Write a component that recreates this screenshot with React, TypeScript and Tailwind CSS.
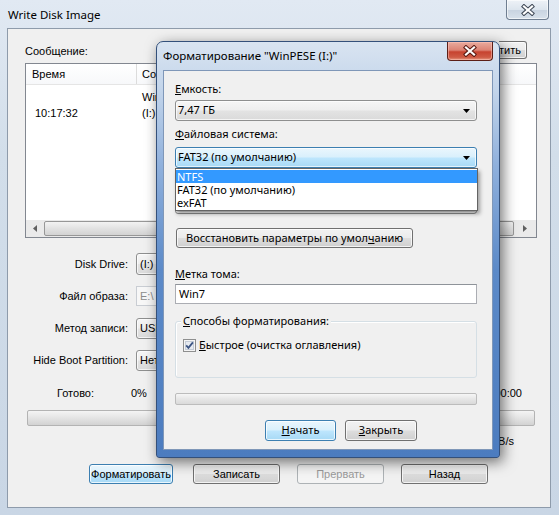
const btnBase =
  "flex items-center justify-center whitespace-nowrap rounded-[3px] border border-[#707070] bg-[linear-gradient(180deg,#f2f2f2_0%,#ebebeb_48%,#dddddd_52%,#cfcfcf_100%)] shadow-[inset_0_0_0_1px_rgba(255,255,255,0.75)]";
const btnFocus =
  "flex items-center justify-center whitespace-nowrap rounded-[3px] border border-[#3c7fb1] bg-[linear-gradient(180deg,#eaf6fd_0%,#d9f0fc_48%,#bee6fd_52%,#a7d9f5_100%)] shadow-[inset_0_0_0_1px_rgba(255,255,255,0.75)]";
const comboFocus =
  "flex items-center justify-between rounded-[3px] border border-[#3c7fb1] bg-[linear-gradient(180deg,#eaf6fd_0%,#d9f0fc_48%,#bee6fd_52%,#a7d9f5_100%)] shadow-[inset_0_0_0_1px_rgba(255,255,255,0.7)]";
const combo =
  "flex items-center justify-between rounded-[3px] border border-[#8e8f8f] bg-[linear-gradient(180deg,#f6f6f6_0%,#eeeeee_48%,#e3e3e3_52%,#dadada_100%)] shadow-[inset_0_0_0_1px_rgba(255,255,255,0.7)]";
const textbox = "flex items-center border border-[#abadb3] border-t-[#8e9399] bg-white";

function Arrow() {
  return (
    <svg width="7" height="4" viewBox="0 0 7 4" className="shrink-0">
      <path d="M0 0h7L3.5 4z" fill="#000" />
    </svg>
  );
}

function GrayClose() {
  return (
    <div className="mr-[10px] flex h-[20px] w-[43px] items-center justify-center rounded-b-[4px] border border-t-0 border-[#6f7e91] bg-[linear-gradient(180deg,#eef2f7_0%,#dde5ee_50%,#c9d4e1_55%,#d8e1eb_100%)] shadow-[inset_0_0_0_1px_rgba(255,255,255,0.6)]">
      <svg width="14" height="12" viewBox="0 0 14 12">
        <path d="M3 2.5L11 9.5M11 2.5L3 9.5" stroke="#3f4856" strokeWidth="4.2" strokeLinecap="square" />
        <path d="M3 2.5L11 9.5M11 2.5L3 9.5" stroke="#ffffff" strokeWidth="2.2" strokeLinecap="square" />
      </svg>
    </div>
  );
}

function RedClose() {
  return (
    <div className="flex h-[19px] w-[46px] items-center justify-center rounded-b-[4px] border border-t-0 border-[#5c1f17] bg-[linear-gradient(180deg,#e9ab9e_0%,#dc8374_45%,#c7432f_55%,#cf5b45_85%,#e49a82_100%)] shadow-[inset_0_0_0_1px_rgba(255,200,190,0.5)]">
      <svg width="14" height="12" viewBox="0 0 14 12">
        <path d="M3 2.5L11 9.5M11 2.5L3 9.5" stroke="#5a1a12" strokeWidth="4.2" strokeLinecap="square" />
        <path d="M3 2.5L11 9.5M11 2.5L3 9.5" stroke="#ffffff" strokeWidth="2.2" strokeLinecap="square" />
      </svg>
    </div>
  );
}

function Check() {
  return (
    <svg width="13" height="13" viewBox="0 0 13 13" className="shrink-0">
      <rect x="0.5" y="0.5" width="12" height="12" fill="#f4f4f4" stroke="#8e8f8f" />
      <rect x="2.5" y="2.5" width="8" height="8" fill="#e6eaf0" stroke="#c3cbd6" />
      <path d="M3.2 6.3L5.4 8.8L9.9 3.4" fill="none" stroke="#3b5483" strokeWidth="1.8" />
    </svg>
  );
}

function FormatDialog() {
  return (
    <div className="absolute left-[156px] top-[41px] h-[417px] w-[344px] rounded-t-[7px] rounded-b-[3px] border border-[#34507a] bg-[linear-gradient(180deg,#d9e4f1_0%,#c2d4ea_12%,#8fb0dc_30%,#5c8ac8_55%,#4c7cbf_100%)] font-['Noto_Sans',sans-serif] text-[11px] shadow-[3px_4px_14px_rgba(0,0,0,0.55)]">
      {/* Title bar */}
      <div className="flex h-[28px] items-start justify-between">
        <span className="pl-[6px] pt-[6px] text-[11.5px] leading-[16px]">Форматирование "WinPESE (I:)"</span>
        <div className="mr-[6px]">
          <RedClose />
        </div>
      </div>

      {/* Client */}
      <div className="relative ml-[6px] h-[380px] w-[330px] border border-[#7f97b8] bg-[#f0f0f0] pl-[11px] pt-[10px]">
        <div className="leading-[16px]"><u>Е</u>мкость:</div>
        <div className={`${combo} mt-[3px] h-[21px] w-[302px] pl-[2px] pr-[6px]`}>
          <span>7,47 ГБ</span>
          <Arrow />
        </div>

        <div className="mt-[5px] leading-[16px]"><u>Ф</u>айловая система:</div>
        <div className={`${comboFocus} mt-[5px] h-[21px] w-[302px] pl-[2px] pr-[6px]`}>
          <span>FAT32 (по умолчанию)</span>
          <Arrow />
        </div>

        {/* Cluster size row, covered by the open list */}
        <div className="mt-[4px] h-[16px]" />
        <div className={`${combo} mt-[5px] h-[21px] w-[302px] pl-[2px] pr-[6px]`}>
          <span />
          <Arrow />
        </div>

        <div className={`${btnBase} ml-[1px] mt-[14px] h-[20px] w-[237px]`}>
          <span>Восстановить параметры по умол<u>ч</u>анию</span>
        </div>

        <div className="mt-[18px] leading-[16px]"><u>М</u>етка тома:</div>
        <div className={`${textbox} mt-[2px] h-[20px] w-[302px] pl-[3px]`}>Win7</div>

        {/* Format options group */}
        <div className="relative mt-[17px] h-[57px] w-[302px] rounded-[3px] border border-[#d5dfe5] shadow-[inset_1px_1px_0_#ffffff]">
          <span className="absolute left-[5px] top-[-9px] bg-[#f0f0f0] px-[2px] leading-[16px]">
            <u>С</u>пособы форматирования:
          </span>
          <div className="absolute left-[7px] top-[15px] flex items-center gap-[3px] leading-[16px]">
            <Check />
            <span><u>Б</u>ыстрое (очистка оглавления)</span>
          </div>
        </div>

        <div className="mt-[15px] h-[12px] w-[302px] rounded-[2px] border border-[#bcbcbc] bg-[linear-gradient(180deg,#f6f6f6_0%,#e6e6e6_50%,#dadada_100%)]" />

        <div className="mt-[15px] flex gap-[9px] pl-[90px]">
          <div className={`${btnFocus} h-[21px] w-[71px]`}><span><u>Н</u>ачать</span></div>
          <div className={`${btnBase} h-[21px] w-[72px]`}><span><u>З</u>акрыть</span></div>
        </div>

        {/* Open dropdown */}
        <div className="absolute left-[11px] top-[97px] w-[303px] border border-[#646464] bg-white py-[1px] leading-[13px] shadow-[2px_3px_4px_rgba(0,0,0,0.35)]">
          <div className="bg-[#3399ff] pl-[1px] text-white">NTFS</div>
          <div className="pl-[1px]">FAT32 (по умолчанию)</div>
          <div className="pl-[1px]">exFAT</div>
        </div>
      </div>
    </div>
  );
}

export default function App() {
  return (
    <div className="relative h-[515px] w-[559px] overflow-hidden bg-[linear-gradient(180deg,#e1e9f3_0%,#d2deea_30%,#c9d6e5_100%)] font-['Liberation_Sans',Arial,sans-serif] text-[11px] text-black">
      {/* Title bar */}
      <div className="flex h-[28px] items-start justify-between">
        <span className="pl-[8px] pt-[7px] font-['Noto_Sans',sans-serif] text-[11.5px] leading-[16px]">Write Disk Image</span>
        <GrayClose />
      </div>

      {/* Client area */}
      <div className="ml-[7px] h-[480px] w-[544px] border border-[#8e9bab] bg-[#f0f0f0]">
        <div className="mt-[12px] flex h-[18px] items-center justify-between pl-[17px] pr-[23px]">
          <span className="pt-[3px]">Сообщение:</span>
          <div className={`${btnBase} h-[18px] w-[28px] justify-end overflow-hidden rounded-l-none border-l-0 pr-[5px]`}>Очистить</div>
        </div>

        {/* Log list */}
        <div className="ml-[17px] mt-[4px] flex h-[175px] w-[512px] flex-col border border-[#828790] bg-white">
          <div className="flex h-[21px] border-b border-[#e5e5e5] bg-[linear-gradient(180deg,#ffffff_0%,#f7f8fa_100%)] leading-[20px]">
            <div className="w-[111px] border-r border-[#dcdcdc] pl-[6px]">Время</div>
            <div className="w-[19px] overflow-hidden whitespace-nowrap pl-[5px]">Сообщение</div>
          </div>
          <div className="flex flex-1 pt-[4px] leading-[16px]">
            <div className="flex h-[48px] w-[111px] items-center pl-[9px]">10:17:32</div>
            <div className="w-[19px] overflow-hidden whitespace-nowrap pl-[5px]">
              <div>WinPESE</div>
              <div>(I:)</div>
            </div>
          </div>
          <div className="flex h-[17px] bg-[#eaeaea]">
            <div className="flex w-[17px] items-center justify-center">
              <svg width="4" height="7" viewBox="0 0 4 7"><path d="M4 0v7L0 3.5z" fill="#606060" /></svg>
            </div>
            <div className="my-[1px] ml-[1px] flex-1 rounded-[2px] border border-[#979797] bg-[linear-gradient(180deg,#f3f3f3_0%,#e2e2e2_50%,#d3d3d3_100%)]" />
            <div className="flex w-[22px] items-center justify-center">
              <svg width="4" height="7" viewBox="0 0 4 7"><path d="M0 0v7L4 3.5z" fill="#606060" /></svg>
            </div>
          </div>
        </div>

        {/* Settings rows */}
        <div className="mt-[10px] flex flex-col">
          <div className="flex h-[32px] items-center">
            <span className="w-[120px] text-right">Disk Drive:</span>
            <div className={`${combo} ml-[8px] h-[22px] w-[24px] overflow-hidden whitespace-nowrap pl-[3px]`}>
              <span>(I:)</span>
            </div>
          </div>
          <div className="flex h-[32px] items-center">
            <span className="w-[120px] text-right">Файл образа:</span>
            <div className="ml-[8px] flex h-[20px] w-[24px] items-center overflow-hidden whitespace-nowrap border border-[#c9cdd3] bg-[#f7f7f7] pl-[3px] text-[#8a8a8a]">E:\</div>
          </div>
          <div className="flex h-[32px] items-center">
            <span className="w-[120px] text-right">Метод записи:</span>
            <div className={`${combo} ml-[8px] h-[21px] w-[24px] overflow-hidden whitespace-nowrap pl-[3px]`}>
              <span>USB</span>
            </div>
          </div>
          <div className="flex h-[32px] items-center">
            <span className="w-[120px] text-right">Hide Boot Partition:</span>
            <div className={`${combo} ml-[8px] h-[21px] w-[24px] overflow-hidden whitespace-nowrap pl-[3px]`}>
              <span>Нет</span>
            </div>
          </div>
        </div>

        <div className="mt-[8px] flex h-[18px] items-center pr-[28px]">
          <span className="ml-[49px] w-[74px]">Готово:</span>
          <span>0%</span>
          <div className="ml-auto flex w-[23px] justify-end overflow-hidden whitespace-nowrap">00:00:00</div>
        </div>

        <div className="ml-[19px] mr-[15px] mt-[8px] h-[16px] rounded-[2px] border border-[#b3b3b3] bg-[linear-gradient(180deg,#f4f4f4_0%,#e4e4e4_50%,#d2d2d2_100%)]" />

        <div className="mt-[7px] flex justify-end pr-[36px] leading-[16px]">
          <div className="flex w-[16px] justify-end overflow-hidden whitespace-nowrap">0 KB/s</div>
        </div>

        {/* Bottom buttons */}
        <div className="mt-[15px] flex h-[20px]">
          <div className={`${btnFocus} ml-[81px] w-[84px]`}>Форматировать</div>
          <div className={`${btnBase} ml-[20px] w-[87px]`}>Записать</div>
          <div className="ml-[17px] flex w-[87px] items-center justify-center rounded-[3px] border border-[#adb2b5] bg-[#f4f4f4] text-[#9a9a9a]">Прервать</div>
          <div className={`${btnBase} ml-[17px] w-[87px]`}>Назад</div>
        </div>
      </div>

      <FormatDialog />
    </div>
  );
}
